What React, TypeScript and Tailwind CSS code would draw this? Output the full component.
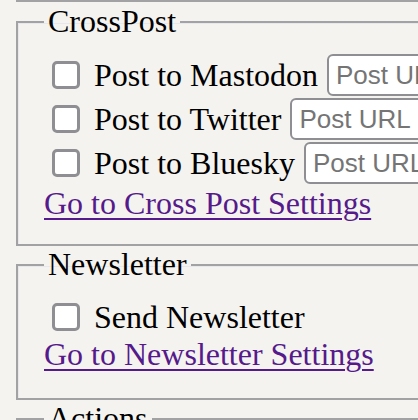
import React from "react";

const serif = "font-['Liberation_Serif',_'Times_New_Roman',_serif]";

function Box() {
  return (
    <span className="ml-[8px] mr-[14px] inline-block h-[28px] w-[28px] shrink-0 rounded-[5px] border-[3px] border-[#8e8e93] bg-white" />
  );
}

function UrlInput() {
  return (
    <input
      type="text"
      placeholder="Post URL"
      className="ml-[9px] h-[42px] w-[300px] shrink-0 rounded-[6px] border-2 border-[#8e8e93] bg-white px-[7px] font-['Liberation_Sans',_Arial,_sans-serif] text-[26px] text-black placeholder:text-[#757575] outline-none"
    />
  );
}

function Row({ label, url = false }: { label: string; url?: boolean }) {
  return (
    <div className={`flex items-center whitespace-nowrap ${url ? "h-[44px]" : "h-[38px]"}`}>
      <Box />
      <span>{label}</span>
      {url && <UrlInput />}
    </div>
  );
}

function Group({ title, children, pad }: { title: string; children?: React.ReactNode; pad: string }) {
  return (
    <fieldset
      className={`w-[700px] border-2 border-[#a2a2a5] px-[26px] ${pad} shadow-[inset_1px_1px_0_#e8e8ec]`}
    >
      <legend className="px-[4px] leading-[37px]">{title}</legend>
      {children}
    </fieldset>
  );
}

function SettingsLink({ children }: { children: React.ReactNode }) {
  return (
    <div className="h-[37px] leading-[37px]">
      <a href="#" className="text-[#551a8b] underline decoration-[2px] underline-offset-[4px]">
        {children}
      </a>
    </div>
  );
}

export default function App() {
  return (
    <div className={`h-[420px] w-[418px] overflow-hidden bg-[#f5f3ef] text-[32px] text-black ${serif}`}>
      <div className="ml-[16px] h-[2px] w-[700px] border-l-2 border-b-2 border-[#a2a2a5]" />
      <div className="mt-[1px] pl-[16px]">
        <Group title="CrossPost" pad="pt-[13px] pb-[22px]">
          <Row label="Post to Mastodon" url />
          <Row label="Post to Twitter" url />
          <Row label="Post to Bluesky" url />
          <SettingsLink>Go to Cross Post Settings</SettingsLink>
        </Group>
        <Group title="Newsletter" pad="pt-[15px] pb-[25px]">
          <Row label="Send Newsletter" />
          <SettingsLink>Go to Newsletter Settings</SettingsLink>
        </Group>
        <Group title="Actions" pad="pt-[13px] pb-[40px]" />
      </div>
    </div>
  );
}
